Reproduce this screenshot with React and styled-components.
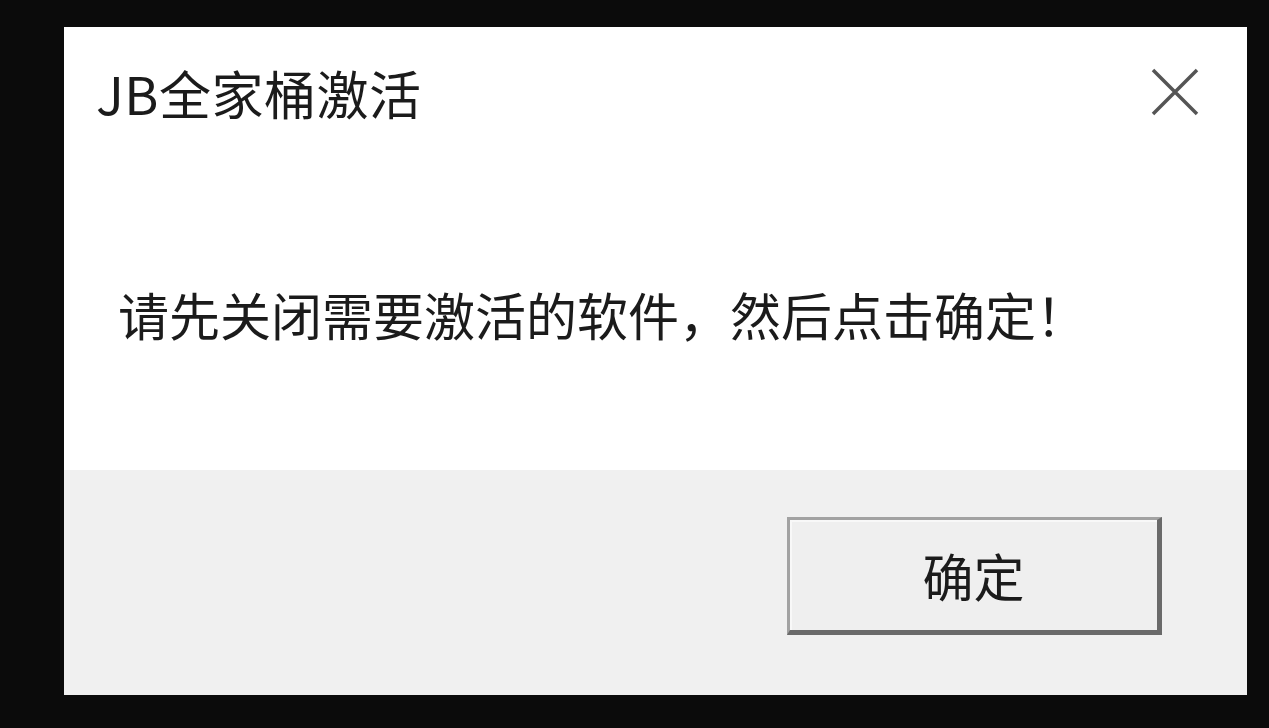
import React from 'react';
import styled, { createGlobalStyle } from 'styled-components';

const GlobalStyle = createGlobalStyle`
    html, body {
        margin: 0;
        padding: 0;
        background: #0b0b0b;
    }
    body {
        font-family: "Noto Sans CJK SC", "Noto Sans", sans-serif;
    }
`;

const Screen = styled.div`
    width: 1269px;
    height: 728px;
    box-sizing: border-box;
    padding: 27px 0 0 64px;
    background: #0b0b0b;
`;

const Dialog = styled.div`
    width: 1183px;
    height: 668px;
    display: flex;
    flex-direction: column;
    background: #ffffff;
    filter: blur(0.5px);
`;

const TitleBar = styled.div`
    height: 130px;
    display: flex;
    align-items: center;
    justify-content: space-between;
    padding: 0 46px 0 32px;
`;

const Title = styled.div`
    font-size: 52px;
    color: #1b1b1b;
    letter-spacing: 0.5px;
`;

const CloseButton = styled.div`
    width: 52px;
    height: 52px;
    display: flex;
    align-items: center;
    justify-content: center;
`;

const Content = styled.div`
    flex: 1;
    display: flex;
    align-items: center;
    padding-left: 54px;
`;

const Message = styled.div`
    font-size: 51px;
    color: #1b1b1b;
`;

const Footer = styled.div`
    height: 225px;
    background: #f0f0f0;
    display: flex;
    justify-content: flex-end;
    align-items: flex-start;
    padding: 47px 85px 0 0;
    box-sizing: border-box;
`;

const Button = styled.button`
    width: 375px;
    height: 118px;
    box-sizing: border-box;
    background: #efefef;
    border-style: solid;
    border-width: 3px 5px 5px 3px;
    border-color: #a2a2a2 #6a6a6a #6a6a6a #a2a2a2;
    box-shadow: inset 2px 2px 0 #f8f8f8;
    font-family: "Noto Sans CJK SC", "Noto Sans", sans-serif;
    font-size: 51px;
    color: #1b1b1b;
    padding: 0;
    display: flex;
    align-items: center;
    justify-content: center;
`;

const CloseIcon = () => (
    <svg width="48" height="48" viewBox="0 0 48 48">
        <path d="M2 2 L46 46 M46 2 L2 46" stroke="#555555" strokeWidth="3.5" fill="none" />
    </svg>
);

const App = () => {
    return (
        <Screen>
            <GlobalStyle />
            <Dialog>
                <TitleBar>
                    <Title>JB全家桶激活</Title>
                    <CloseButton><CloseIcon /></CloseButton>
                </TitleBar>
                <Content>
                    <Message>请先关闭需要激活的软件，然后点击确定！</Message>
                </Content>
                <Footer>
                    <Button>确定</Button>
                </Footer>
            </Dialog>
        </Screen>
    );
}

export default App;
